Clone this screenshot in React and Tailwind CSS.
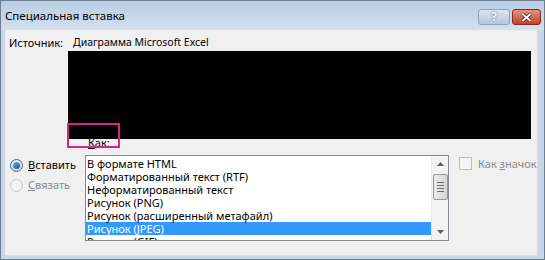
import React from "react";

const items = [
  "В формате HTML",
  "Форматированный текст (RTF)",
  "Неформатированный текст",
  "Рисунок (PNG)",
  "Рисунок (расширенный метафайл)",
  "Рисунок (JPEG)",
  "Рисунок (GIF)",
];

export default function App() {
  return (
    <div
      className="w-[545px] h-[260px] overflow-hidden relative bg-[#c9d8e8] border border-[#6f7f90]"
      style={{ fontFamily: '"Noto Sans", "Open Sans", sans-serif' }}
    >
      {/* title bar */}
      <div className="h-[29px] flex items-center justify-between pl-[4px] pr-[3px] bg-gradient-to-b from-[#b9cde2] to-[#d3e0ee]">
        <span className="text-[11.5px] text-black">Специальная вставка</span>
        <div className="flex gap-[2px] self-start mt-[8px]">
          <div className="w-[32px] h-[16px] rounded-[3px] border border-[#8ea3b9] bg-gradient-to-b from-[#dbe6f1] to-[#b4c7db] flex items-center justify-center text-[12px] font-bold text-white leading-none [text-shadow:0_0_2px_#3b4f66]">?</div>
          <div className="w-[29px] h-[16px] rounded-[3px] border border-[#8d2c1d] bg-gradient-to-b from-[#e6917c] to-[#c3402a] flex items-center justify-center">
            <svg width="11" height="9" viewBox="0 0 11 9">
              <path d="M1.5 1 L9.5 8 M9.5 1 L1.5 8" stroke="#3b1510" strokeWidth="3.4" />
              <path d="M1.5 1 L9.5 8 M9.5 1 L1.5 8" stroke="#fff" strokeWidth="2" />
            </svg>
          </div>
        </div>
      </div>

      {/* content */}
      <div className="absolute left-[4px] right-[6px] top-[29px] bottom-[3px] bg-[#f0f0f0] border-r border-b border-[#dcdcdc]">
        <div className="text-[11px] text-black leading-[11px] flex pt-[7px] pl-[4px]">
          <span className="w-[64px]">Источник:</span>
          <span className="text-[10.5px]">Диаграмма Microsoft Excel</span>
        </div>
        <div className="ml-[63px] mt-[3px] w-[463px] h-[88px] bg-black" />
        <div className="relative">
          <div className="absolute left-[62px] top-[-13px] w-[53px] h-[25px] border-2 border-[#d8238a]" />
          <div className="pl-[83px] text-[11px] leading-[13px] text-black mt-[-3px]">
            <span className="underline">К</span>ак:
          </div>
        </div>
        <div className="flex mt-[6px]">
          <div className="w-[80px] pl-[5px] pt-[3px] flex flex-col gap-[6px]">
            <div className="flex items-center gap-[5px] text-[11px] text-black leading-[14px]">
              <div className="w-[13px] h-[13px] rounded-full border border-[#3e6b9a] bg-gradient-to-b from-[#eaf2fa] to-[#c4d7ea] flex items-center justify-center">
                <div className="w-[7px] h-[7px] rounded-full bg-gradient-to-br from-[#6fb2e6] to-[#1a4f8a]" />
              </div>
              <span><span className="underline">В</span>ставить</span>
            </div>
            <div className="flex items-center gap-[5px] text-[11px] text-[#8a8a8a] leading-[14px]">
              <div className="w-[13px] h-[13px] rounded-full border border-[#c6c6c6] bg-[#f4f4f4]" />
              <span><span className="underline">С</span>вязать</span>
            </div>
          </div>
          <div className="w-[364px] h-[86px] border border-[#828790] bg-white flex overflow-hidden">
            <div className="flex-1 pt-[1px] overflow-hidden">
              {items.map((t, i) => (
                <div
                  key={t}
                  className={
                    "h-[13px] leading-[13px] text-[11px] pl-[1px] whitespace-nowrap " +
                    (i === 5 ? "bg-[#3399ff] text-white" : "text-black")
                  }
                >
                  {t}
                </div>
              ))}
            </div>
            <div className="w-[17px] bg-[#f3f3f3] border-l border-[#e6e6e6] flex flex-col items-center">
              <div className="h-[16px] flex items-center justify-center">
                <svg width="7" height="4" viewBox="0 0 7 4"><path d="M0 4 L3.5 0 L7 4Z" fill="#606060" /></svg>
              </div>
              <div className="w-[15px] h-[26px] mt-[2px] rounded-[2px] border border-[#979797] bg-gradient-to-r from-[#ececec] to-[#d6d6d6] flex flex-col items-center justify-center gap-[2px]">
                <div className="w-[7px] h-px bg-[#6e6e6e]" />
                <div className="w-[7px] h-px bg-[#6e6e6e]" />
                <div className="w-[7px] h-px bg-[#6e6e6e]" />
                <div className="w-[7px] h-px bg-[#6e6e6e]" />
              </div>
              <div className="flex-1" />
              <div className="h-[16px] flex items-center justify-center">
                <svg width="7" height="4" viewBox="0 0 7 4"><path d="M0 0 L3.5 4 L7 0Z" fill="#606060" /></svg>
              </div>
            </div>
          </div>
          <div className="ml-[10px] pt-[2px] flex items-start gap-[6px] text-[11px] text-[#8a8a8a] leading-[14px] whitespace-nowrap">
            <div className="w-[13px] h-[13px] shrink-0 border border-[#bcbcbc] bg-[#f4f4f4]" />
            <span>Как <span className="underline">з</span>начок</span>
          </div>
        </div>
      </div>
    </div>
  );
}
